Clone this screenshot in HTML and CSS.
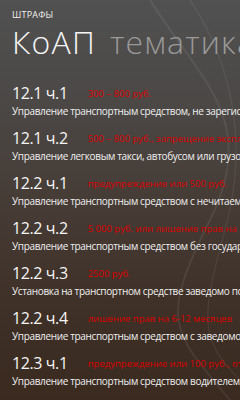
FILE: index.html
```html
<!DOCTYPE html>
<html lang="ru">
<head>
<meta charset="utf-8">
<link rel="stylesheet" href="styles.css">
</head>
<body>
<div class="screen">
  <svg class="bg-curves" width="240" height="400" viewBox="0 0 240 400">
    <path d="M150 0 C 200 80, 260 120, 210 220 S 170 330, 230 400" fill="none" stroke="rgba(255,255,255,0.07)" stroke-width="2"/>
    <path d="M190 0 C 230 60, 250 140, 225 230 S 200 340, 240 380" fill="none" stroke="rgba(255,255,255,0.06)" stroke-width="1.5"/>
  </svg>
  <header class="head">
    <div class="app-title">ШТРАФЫ</div>
    <div class="pivot"><span class="pivot-active">КоАП</span><span class="pivot-next">тематика</span></div>
  </header>
  <ul class="list">
    <li class="item">
      <div class="item-top"><span class="code">12.1 ч.1</span><span class="fine">300 – 800 руб.</span></div>
      <div class="desc">Управление транспортным средством, не зарегистрированным в установленном порядке</div>
    </li>
    <li class="item">
      <div class="item-top"><span class="code">12.1 ч.2</span><span class="fine">500 – 800 руб., запрещение эксплуатации</span></div>
      <div class="desc">Управление легковым такси, автобусом или грузовым автомобилем</div>
    </li>
    <li class="item">
      <div class="item-top"><span class="code">12.2 ч.1</span><span class="fine">предупреждение или 500 руб.</span></div>
      <div class="desc">Управление транспортным средством с нечитаемыми государственными знаками</div>
    </li>
    <li class="item">
      <div class="item-top"><span class="code">12.2 ч.2</span><span class="fine">5 000 руб. или лишение прав на 1-3 месяца</span></div>
      <div class="desc">Управление транспортным средством без государственных знаков</div>
    </li>
    <li class="item">
      <div class="item-top"><span class="code">12.2 ч.3</span><span class="fine">2500 руб.</span></div>
      <div class="desc">Установка на транспортном средстве заведомо подложных знаков</div>
    </li>
    <li class="item">
      <div class="item-top"><span class="code">12.2 ч.4</span><span class="fine">лишение прав на 6-12 месяцев</span></div>
      <div class="desc">Управление транспортным средством с заведомо подложными знаками</div>
    </li>
    <li class="item">
      <div class="item-top"><span class="code">12.3 ч.1</span><span class="fine">предупреждение или 100 руб., отстранение</span></div>
      <div class="desc">Управление транспортным средством водителем, не имеющим при себе документов</div>
    </li>
  </ul>
</div>
</body>
</html>
```
FILE: styles.css
```css
html, body {
  margin: 0;
  padding: 0;
}
body {
  width: 240px;
  height: 400px;
  overflow: hidden;
  font-family: "Open Sans", "Noto Sans", sans-serif;
  color: #f2f2f2;
}
.screen {
  position: relative;
  width: 240px;
  height: 400px;
  overflow: hidden;
  background: linear-gradient(180deg, #515151 0%, #4b4846 25%, #463c36 50%, #3f3128 75%, #3a2a20 100%);
}
.bg-curves {
  position: absolute;
  left: 0;
  top: 0;
}
.head {
  position: relative;
  padding: 10px 0 0 12px;
}
.app-title {
  font-size: 9px;
  line-height: 10px;
  letter-spacing: 0.2px;
  color: #f0f0f0;
}
.pivot {
  display: flex;
  align-items: baseline;
  gap: 14px;
  white-space: nowrap;
  font-size: 32px;
  font-weight: 300;
  letter-spacing: 1.2px;
  line-height: 44px;
}
.pivot-active {
  color: #f5f5f5;
}
.pivot-next {
  color: #9a9a9a;
}
.list {
  position: relative;
  list-style: none;
  margin: 0;
  padding: 18px 0 0 12px;
}
.item {
  height: 45px;
  white-space: nowrap;
  overflow: hidden;
}
.item-top {
  display: flex;
  align-items: center;
  height: 22px;
}
.code {
  font-size: 16px;
  letter-spacing: -0.4px;
  color: #f5f5f5;
}
.fine {
  margin-left: 20px;
  font-size: 9.5px;
  color: #dd0000;
}
.desc {
  font-size: 10px;
  letter-spacing: -0.35px;
  line-height: 14px;
  color: #f0f0f0;
}
```
